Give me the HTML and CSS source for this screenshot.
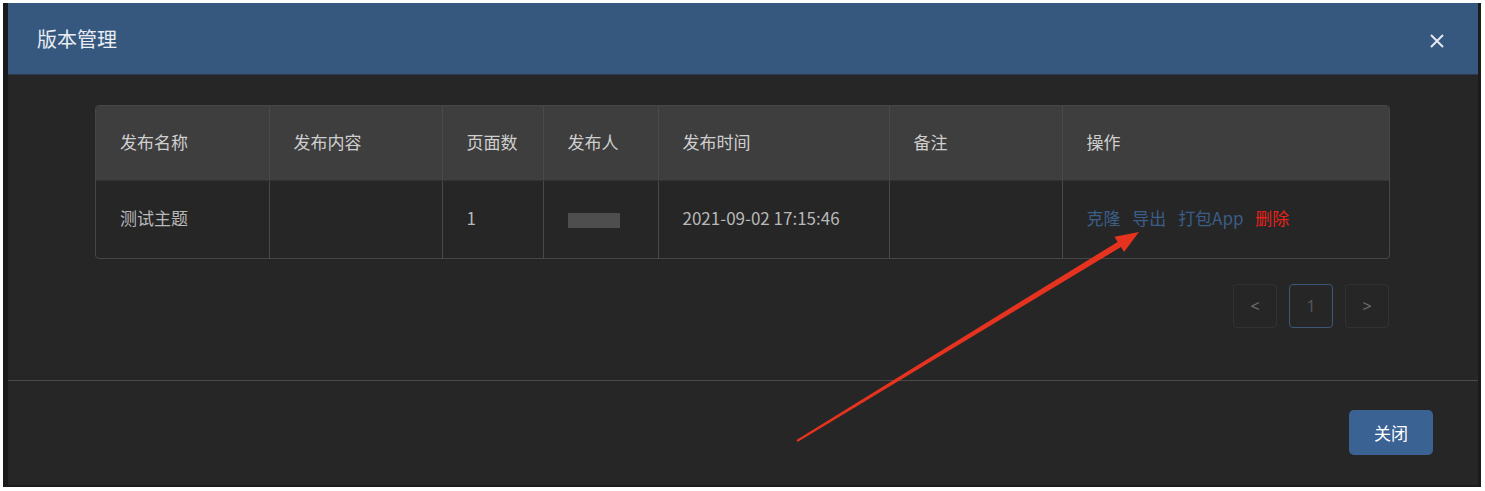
FILE: index.html
```html
<!DOCTYPE html>
<html lang="zh-CN">

<head>
    <meta charset="UTF-8">
    <meta name="viewport" content="width=device-width, initial-scale=1.0">
    <link rel="stylesheet" href="styles.css">
</head>

<body>
    <div class="dialog">
        <div class="panel">
            <div class="dialog-header">
                <h1>版本管理</h1>
                <span class="close">
                    <svg width="14" height="14" viewBox="0 0 14 14">
                        <path d="M1 1 L13 13 M13 1 L1 13" stroke="#e3e9f0" stroke-width="2" fill="none" />
                    </svg>
                </span>
            </div>
            <div class="dialog-body">
                <div class="table-wrap">
                    <table>
                        <thead>
                            <tr>
                                <th class="c1">发布名称</th>
                                <th class="c2">发布内容</th>
                                <th class="c3">页面数</th>
                                <th class="c4">发布人</th>
                                <th class="c5">发布时间</th>
                                <th class="c6">备注</th>
                                <th class="c7">操作</th>
                            </tr>
                        </thead>
                        <tbody>
                            <tr>
                                <td>测试主题</td>
                                <td></td>
                                <td>1</td>
                                <td><span class="blur"></span></td>
                                <td>2021-09-02 17:15:46</td>
                                <td></td>
                                <td class="actions">
                                    <a>克隆</a>
                                    <a>导出</a>
                                    <a>打包App</a>
                                    <a class="danger">删除</a>
                                </td>
                            </tr>
                        </tbody>
                    </table>
                </div>
                <div class="pager">
                    <button class="page">&lt;</button>
                    <button class="page active">1</button>
                    <button class="page">&gt;</button>
                </div>
            </div>
            <div class="dialog-footer">
                <button class="btn-primary">关闭</button>
            </div>
        </div>
    </div>

    <!-- annotation arrow drawn over the screenshot -->
    <svg class="arrow" width="1485" height="491" viewBox="0 0 1485 491">
        <polygon fill="#e5331f"
            points="1139,232 1124,252 1121,247 797.5,442 796.5,440 1117.6,241.9 1114.5,236.8" />
    </svg>
</body>

</html>
```

FILE: styles.css
```css
body {
    font-family: "Noto Sans CJK SC", "Noto Sans", sans-serif;
    background-color: #ffffff;
    margin: 0;
    padding: 0;
}

.dialog {
    margin: 3px 4px 4px 3px;
    padding: 0 3px 2px 5px;
    background-color: #1b1b1b;
    height: 482px;
}

.panel {
    background-color: #262626;
    height: 482px;
    display: flex;
    flex-direction: column;
}

.dialog-header {
    height: 72px;
    background-color: #37587e;
    display: flex;
    align-items: center;
    justify-content: space-between;
    padding: 0 34px 0 29px;
    border-bottom: 1px solid #2c3a4a;
    box-sizing: border-box;
}

.dialog-header h1 {
    margin: 0;
    font-size: 20px;
    font-weight: 400;
    color: #e8edf3;
}

.close {
    display: flex;
    margin-top: 4px;
}

.dialog-body {
    padding: 30px 88px 0 87px;
    height: 306px;
    box-sizing: border-box;
    border-bottom: 1px solid #4a4a4a;
}

.table-wrap {
    border: 1px solid #464646;
    border-radius: 4px;
    overflow: hidden;
}

table {
    width: 100%;
    border-collapse: collapse;
    table-layout: fixed;
}

th,
td {
    text-align: left;
    padding: 0 0 0 24px;
    font-size: 17px;
    font-weight: 400;
    border-left: 1px solid #4a4a4a;
    white-space: nowrap;
    box-sizing: border-box;
}

th:first-child,
td:first-child {
    border-left: none;
}

th {
    height: 74px;
    padding-bottom: 2px;
    background-color: #3e3e3e;
    color: #cfcfcf;
    border-bottom: 1px solid #333;
}

td {
    height: 78px;
    padding-bottom: 4px;
    color: #b8b8b8;
}

.c1 { width: 173px; }
.c2 { width: 173px; }
.c3 { width: 101px; }
.c4 { width: 115px; }
.c5 { width: 231px; }
.c6 { width: 173px; }

.blur {
    display: inline-block;
    width: 52px;
    height: 15px;
    background-color: #4e4e4e;
    vertical-align: middle;
}

.actions a {
    color: #3b5e88;
    margin-right: 8px;
    cursor: pointer;
}

.actions a.danger {
    color: #e3231c;
    margin-right: 0;
}

.pager {
    display: flex;
    justify-content: flex-end;
    gap: 12px;
    margin-top: 25px;
    padding-right: 1px;
}

.page {
    width: 44px;
    height: 44px;
    background: none;
    border: 1px solid #323232;
    border-radius: 4px;
    color: #6e6e6e;
    font-size: 16px;
    font-family: "Noto Sans", sans-serif;
}

.page.active {
    border-color: #3d5778;
    color: #555;
}

.dialog-footer {
    display: flex;
    justify-content: flex-end;
    padding: 29px 45px 0 0;
}

.btn-primary {
    width: 84px;
    height: 45px;
    background-color: #3a6394;
    color: #ffffff;
    border: none;
    border-radius: 5px;
    font-size: 17px;
    font-family: "Noto Sans CJK SC", sans-serif;
    cursor: pointer;
}

.arrow {
    position: absolute;
    left: 0;
    top: 0;
    pointer-events: none;
}
```
